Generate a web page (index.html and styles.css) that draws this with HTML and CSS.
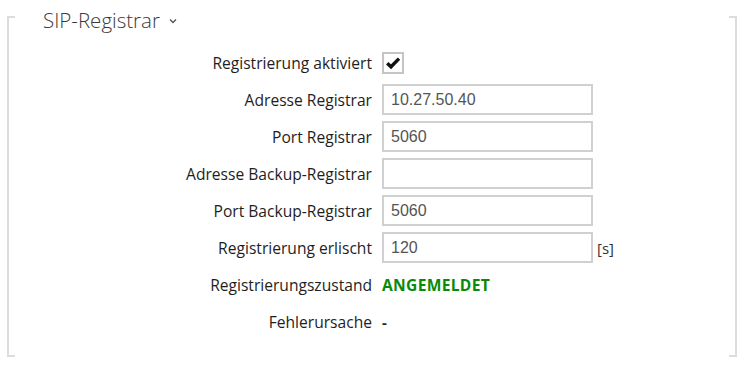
FILE: index.html
```html
<!DOCTYPE html>
<html>
  <head>
    <meta charset="UTF-8" />
    <title>SIP-Registrar</title>
    <link rel="stylesheet" href="styles.css">
  </head>

  <body>
    <div class="panel">
      <div class="panel-title">
        <span>SIP-Registrar</span>
        <svg class="chevron" width="8" height="6" viewBox="0 0 8 6">
          <polyline points="1,1.5 4,4.5 7,1.5" fill="none" stroke="#555" stroke-width="1.4" />
        </svg>
      </div>
      <div class="form">
        <div class="label">Registrierung aktiviert</div>
        <div class="control">
          <span class="checkbox">
            <svg width="16" height="14" viewBox="0 0 16 14">
              <polyline points="2.2,7.2 6,10.8 14,2.6" fill="none" stroke="#111" stroke-width="3.4" stroke-linejoin="miter" />
            </svg>
          </span>
        </div>

        <div class="label">Adresse Registrar</div>
        <div class="control"><input class="text" type="text" value="10.27.50.40" /></div>

        <div class="label">Port Registrar</div>
        <div class="control"><input class="text" type="text" value="5060" /></div>

        <div class="label">Adresse Backup-Registrar</div>
        <div class="control"><input class="text" type="text" value="" /></div>

        <div class="label">Port Backup-Registrar</div>
        <div class="control"><input class="text" type="text" value="5060" /></div>

        <div class="label">Registrierung erlischt</div>
        <div class="control"><input class="text" type="text" value="120" /><span class="unit">[s]</span></div>

        <div class="label">Registrierungszustand</div>
        <div class="control"><span class="state">ANGEMELDET</span></div>

        <div class="label">Fehlerursache</div>
        <div class="control"><span class="value">-</span></div>
      </div>
    </div>
  </body>
</html>
```

FILE: styles.css
```css
body {
  margin: 0;
  font-family: 'Open Sans', 'Noto Sans', sans-serif;
  color: #1e1e1e;
  background: #fff;
}

.panel {
  display: flow-root;
  box-sizing: border-box;
  width: 730px;
  height: 341px;
  margin: 16px 0 0 7px;
  border-left: 2px solid #dcdcdc;
  border-right: 2px solid #dcdcdc;
  background:
    linear-gradient(#dcdcdc, #dcdcdc) left top / 6px 2px no-repeat,
    linear-gradient(#dcdcdc, #dcdcdc) right top / 6px 2px no-repeat,
    linear-gradient(#dcdcdc, #dcdcdc) left bottom / 6px 2px no-repeat,
    linear-gradient(#dcdcdc, #dcdcdc) right bottom / 6px 2px no-repeat;
}

.panel-title {
  display: flex;
  align-items: center;
  gap: 9px;
  height: 28px;
  margin: -10px 0 0 34px;
  font-size: 20.5px;
  font-weight: 300;
  color: #3a3a3a;
}

.chevron {
  margin-top: 2px;
}

.form {
  display: grid;
  grid-template-columns: 363px 1fr;
  grid-auto-rows: 31px;
  column-gap: 10px;
  row-gap: 6px;
  margin-top: 13px;
}

.label {
  display: flex;
  align-items: center;
  justify-content: flex-end;
  font-size: 15.6px;
}

.control {
  display: flex;
  align-items: center;
}

.checkbox {
  box-sizing: border-box;
  display: flex;
  align-items: center;
  justify-content: center;
  width: 22px;
  height: 22px;
  border: 2px solid #c4c4c4;
}

.text {
  box-sizing: border-box;
  width: 211px;
  height: 31px;
  margin: 0;
  padding: 0 7px;
  border: 2px solid #d0d0d0;
  font-family: 'Liberation Sans', Arial, sans-serif;
  font-size: 16px;
  color: #555;
  outline: none;
}

.unit {
  margin-left: 4px;
  font-size: 15px;
  color: #333;
}

.state {
  font-size: 15.6px;
  font-weight: 700;
  letter-spacing: 0.3px;
  color: #0a8a0a;
}

.value {
  font-size: 15px;
  font-weight: 700;
}
```
